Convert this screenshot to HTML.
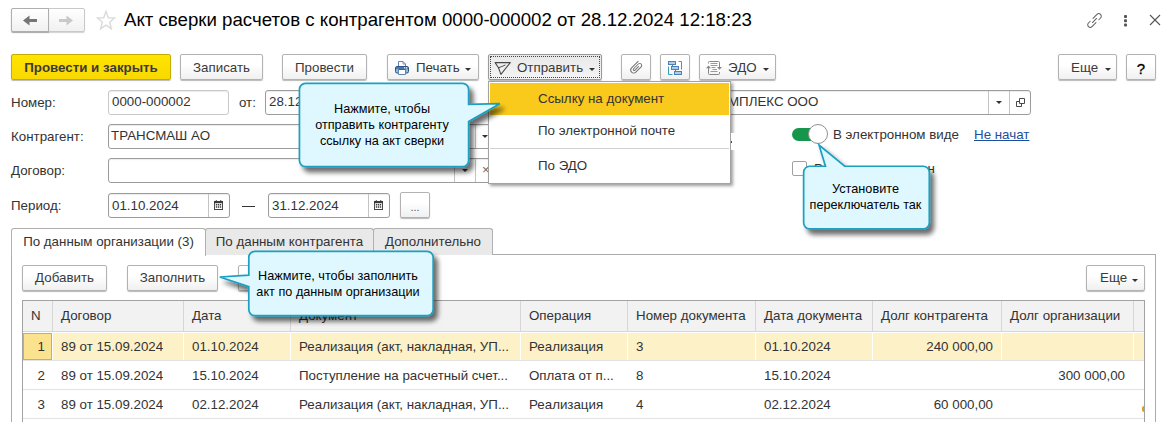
<!DOCTYPE html>
<html lang="ru">
<head>
<meta charset="utf-8">
<title>Акт сверки расчетов с контрагентом</title>
<style>
*{box-sizing:border-box;margin:0;padding:0}
html,body{width:1175px;height:422px;overflow:hidden;background:#fff}
body{position:relative;font-family:"Liberation Sans",sans-serif;font-size:13px;color:#333;line-height:1}
.abs{position:absolute}
.title{left:124px;top:9px;font-size:18.67px;line-height:22px;color:#000;white-space:nowrap}
.btn{position:absolute;top:54px;height:26px;border:1px solid #b2b2b2;border-radius:2px;background:linear-gradient(#ffffff 40%,#f0f0f0);box-shadow:0 1px 1px rgba(0,0,0,.28);font-size:13.33px;line-height:26px;color:#3a3a3a;text-align:center;white-space:nowrap}
.btn.yellow{background:linear-gradient(#ffe400,#f9d800);border-color:#c4ad00;font-weight:bold;color:#3a3a3a}
.btn.focus{background:linear-gradient(#e9e9e9,#f4f4f4);border-color:#9a9a9a}
.btn.focus:after{content:"";position:absolute;left:1px;top:1px;right:1px;bottom:1px;border:1px dotted #444}
.caret{display:inline-block;width:0;height:0;border-left:3px solid transparent;border-right:3px solid transparent;border-top:3px solid #333;vertical-align:middle;margin-left:4px;position:relative;top:1px}
.car{position:absolute;width:0;height:0;border-left:3px solid transparent;border-right:3px solid transparent;border-top:3px solid #333}
.lbl{position:absolute;left:11px;font-size:13.33px;line-height:16px;color:#333;white-space:nowrap}
.inp{position:absolute;height:25px;border:1px solid #9c9c9c;border-radius:3px;background:#fff;font-size:13.33px;line-height:22px;padding-left:3px;color:#333;white-space:nowrap;overflow:hidden;box-shadow:inset 0 1px 1px rgba(0,0,0,.08)}
.ibtn{position:absolute;height:24px;width:21px;border:1px solid #b8b8b8;background:#fff;border-radius:0 3px 3px 0}
.tab{position:absolute;top:228px;height:27px;border:1px solid #b0b0b0;border-bottom:none;background:#e9e9e9;font-size:13.33px;line-height:26px;color:#333;text-align:center;white-space:nowrap;border-radius:3px 3px 0 0}
.tab.active{background:#fff;height:28px;z-index:2}
.panel{position:absolute;left:11px;top:254px;width:1145px;height:200px;border:1px solid #ababab;background:#fff}
.sbtn{position:absolute;top:265px;height:26px;border:1px solid #b2b2b2;border-radius:2px;background:linear-gradient(#ffffff 40%,#f0f0f0);box-shadow:0 1px 1px rgba(0,0,0,.28);font-size:13.33px;line-height:24px;color:#3a3a3a;text-align:center;white-space:nowrap}
.grid{position:absolute;left:22px;top:300px;width:1123px;height:130px;border:1px solid #a2a2a2;background:#fff}
.hdr{position:absolute;left:0;top:0;width:1121px;height:31px;background:#f2f2f2;border-bottom:1px solid #d6d6d6}
.hc{position:absolute;top:0;height:30px;border-left:1px solid #d6d6d6;font-size:13.33px;line-height:30px;padding-left:8px;color:#333;white-space:nowrap;overflow:hidden}
.row{position:absolute;left:0;width:1121px;height:29px;border-bottom:1px solid #e3e3e3}
.row.sel{background:#fdf1c8;border-top:1px solid #fff}
.row.sel .c{top:-1px}
.row.sel .c{border-left-color:#fff}
.c{position:absolute;top:0;height:28px;font-size:13.33px;line-height:28px;padding-top:1px;padding-left:8px;border-left:1px solid transparent;color:#333;white-space:nowrap;overflow:hidden}
.c.r{text-align:right;padding-left:0;padding-right:8px}
.menu{position:absolute;left:488px;top:81px;width:243px;height:103px;background:#fff;border:1px solid #a3a3a3;box-shadow:2px 2px 3px rgba(0,0,0,.38);z-index:5}
.mi{position:absolute;left:1px;width:239px;height:32px;font-size:13.33px;line-height:31px;padding-left:48px;color:#333;white-space:nowrap}
.mi.hl{background:#f9c91c}
.callout{position:absolute;z-index:10}
.ctext{position:absolute;font-size:12.700px;line-height:16px;color:#000;text-align:center;white-space:nowrap;z-index:11}
</style>
</head>
<body>

<!-- nav -->
<div class="abs" style="left:11px;top:8px;width:74px;height:24px;border:1px solid #c9c9c9;border-radius:2px;background:linear-gradient(#fff,#f1f1f1);box-shadow:0 1px 1px rgba(0,0,0,.18)"></div>
<div class="abs" style="left:11px;top:8px;width:38px;height:24px;border:1px solid #aeaeae;border-radius:2px 0 0 2px;background:linear-gradient(#fff,#f1f1f1);box-shadow:0 1px 1px rgba(0,0,0,.2)"></div>
<svg class="abs" style="left:12px;top:9px" width="72" height="22" viewBox="0 0 72 22">
  <path d="M11 11.500 L17.500 6.500 V10 H25 V13 H17.500 V16.500 Z" fill="#757575"/>
  <path d="M61 11.500 L54.500 6.500 V10 H47 V13 H54.500 V16.500 Z" fill="#c9c9c9"/>
</svg>
<svg class="abs" style="left:95px;top:9px" width="22" height="22" viewBox="0 0 22 22"><path d="M11 2.500 L13.300 8.700 L19.400 9 L14.700 13.200 L16.300 19.700 L11 16.200 L5.700 19.700 L7.300 13.200 L2.600 9 L8.700 8.700 Z" fill="none" stroke="#dcdcdc" stroke-width="1.500" stroke-linejoin="miter"/></svg>
<div class="abs title">Акт сверки расчетов с контрагентом 0000-000002 от 28.12.2024 12:18:23</div>

<!-- top-right icons -->
<svg class="abs" style="left:1085px;top:11px" width="19" height="19" viewBox="0 0 19 19" fill="none" stroke="#5e5e5e" stroke-width="1.100" stroke-linecap="round">
  <g transform="translate(9.500 9.500) rotate(-45) scale(0.9)">
    <path d="M0.500 -2.800 H6.700 a2.800 2.800 0 0 1 0 5.600 H4"/>
    <path d="M-0.500 2.800 H-6.700 a2.800 2.800 0 0 1 0 -5.600 H-4"/>
    <path d="M-3.200 0 H3.200"/>
  </g>
</svg>
<div class="abs" style="left:1124px;top:15px;width:2.500px;height:2.500px;border-radius:1px;background:#555;box-shadow:0 4.200px 0 #555,0 8.400px 0 #555"></div>
<svg class="abs" style="left:1149px;top:14px" width="12" height="12" viewBox="0 0 12 12"><path d="M1 1 L11 11 M11 1 L1 11" stroke="#555" stroke-width="1.100"/></svg>

<!-- toolbar -->
<div class="btn yellow" style="left:11px;width:160px">Провести и закрыть</div>
<div class="btn" style="left:180px;width:83px">Записать</div>
<div class="btn" style="left:282px;width:85px">Провести</div>
<div class="btn" style="left:387px;width:92px">
  <svg class="abs" style="left:7px;top:6px" width="16" height="15" viewBox="0 0 16 15">
    <path d="M3.500 5.500 V0.500 H8 L10.500 3 V5.500" fill="#fff" stroke="#6484ad" stroke-width="1"/>
    <path d="M8 0.500 V3 H10.500" fill="none" stroke="#6484ad" stroke-width="0.800"/>
    <rect x="0.500" y="5.500" width="13" height="6.500" rx="1.500" fill="#86c3da" stroke="#2f5287" stroke-width="1"/>
    <rect x="1" y="6" width="12" height="2.200" fill="#4c7bb3"/>
    <rect x="9" y="6.300" width="1.200" height="1.200" fill="#fff"/><rect x="11" y="6.300" width="1.200" height="1.200" fill="#fff"/>
    <path d="M3.500 8.500 H10.500 V13.500 H3.500 Z" fill="#fff" stroke="#6484ad" stroke-width="1"/>
    <path d="M3.500 8.300 H10.500" stroke="#2f5287" stroke-width="0.800"/>
  </svg>
  <span class="abs" style="left:28px;top:0">Печать</span><span class="car" style="left:77px;top:13px"></span></div>
<div class="btn focus" style="left:488px;width:114px">
  <svg class="abs" style="left:5px;top:6px" width="18" height="15" viewBox="0 0 18 15" fill="none" stroke="#484848" stroke-width="1.050" stroke-linejoin="round" stroke-linecap="round">
    <path d="M1.100 1.600 H16.300 L6.900 13.400 L4.500 6.700 Z"/><path d="M4.500 6.700 Q7.500 5.800 11 4.100"/>
  </svg>
  <span class="abs" style="left:28px;top:0">Отправить</span><span class="car" style="left:100px;top:13px"></span></div>
<div class="btn" style="left:621px;width:30px">
  <svg class="abs" style="left:6px;top:4px" width="17" height="17" viewBox="0 0 17 17" fill="none" stroke="#6f6f6f" stroke-width="0.950" stroke-linecap="round">
    <g transform="translate(8.400 8.300) rotate(-45)"><path d="M5.400 -3 H-3.800 a3 3 0 0 0 0 6 H3.700 a2 2 0 0 0 0 -4 H-3 a1 1 0 0 0 0 2 H2"/></g>
  </svg></div>
<div class="btn" style="left:660px;width:30px">
  <svg class="abs" style="left:6px;top:6px" width="16" height="15" viewBox="0 0 16 15">
    <path d="M1.500 5.500 V13.500 H5.500" fill="none" stroke="#3f9ab5" stroke-width="1"/>
    <path d="M11.500 0.500 H14.500 V8.500" fill="none" stroke="#3f9ab5" stroke-width="1"/>
    <rect x="1.500" y="0.500" width="7" height="3" fill="#b3cbea" stroke="#4d7fb8"/>
    <rect x="4.500" y="5.500" width="7" height="3" fill="#b3cbea" stroke="#4d7fb8"/>
    <rect x="7.500" y="10.500" width="7" height="3" fill="#b3cbea" stroke="#4d7fb8"/>
    <path d="M5.500 3.500 V5.500 M8.500 8.500 V10.500" stroke="#4d7fb8"/>
  </svg></div>
<div class="btn" style="left:699px;width:77px">
  <svg class="abs" style="left:6px;top:6px" width="17" height="15" viewBox="0 0 17 15" fill="none" stroke="#858585" stroke-width="1">
    <path d="M2.500 2.500 V1.500 a1 1 0 0 1 1 -1 H12.500 a1 1 0 0 1 1 1 V6"/><path d="M2.500 7 V12.500 a1 1 0 0 0 1 1 H12.500 a1 1 0 0 0 1 -1 V11"/>
    <path d="M4.500 2.500 H11.500 M4.500 4.500 H11.500 M5.500 6.500 H9.500 M6.500 8.500 H11 M4.500 10.500 H11.500" stroke="#8f8f8f" stroke-width="0.900"/>
    <path d="M0 7.200 H5 L2.500 4.600 Z" fill="#858585" stroke="none"/><path d="M11 6.100 H16 L13.500 8.700 Z" fill="#858585" stroke="none"/>
  </svg>
  <span class="abs" style="left:28px;top:0">ЭДО</span><span class="car" style="left:63px;top:13px"></span></div>
<div class="btn" style="left:1058px;width:59px"><span class="abs" style="left:12px;top:0">Еще</span><span class="car" style="left:46px;top:13px"></span></div>
<div class="btn" style="left:1126px;width:30px;color:#000;font-size:15px;line-height:28px;-webkit-text-stroke:0.3px #000">?</div>

<!-- form -->
<div class="lbl" style="top:95px">Номер:</div>
<div class="inp" style="left:108px;top:90px;width:121px;border-color:#c9c9c9">0000-000002</div>
<div class="lbl" style="left:239px;top:95px">от:</div>
<div class="inp" style="left:265px;top:90px;width:140px">28.12.2024 12:18:23</div>
<div class="inp" style="left:620px;top:90px;width:411px;padding-left:89px">КОМПЛЕКС ООО</div>
<div class="abs" style="left:988px;top:91px;width:1px;height:23px;background:#c4c4c4"></div>
<div class="abs" style="left:1009px;top:91px;width:1px;height:23px;background:#c4c4c4"></div>
<span class="car" style="left:996px;top:101px"></span>
<svg class="abs" style="left:1016px;top:98px" width="10" height="10" viewBox="0 0 10 10" fill="none" stroke="#4a4a4a" stroke-width="1"><path d="M3.500 0.500 H8.500 V5.500 H3.500 Z"/><path d="M3.500 3.500 H0.500 V8.500 H5.500 V5.500"/></svg>

<div class="lbl" style="top:129px">Контрагент:</div>
<div class="inp" style="left:108px;top:124px;width:408px;padding-left:2px">ТРАНСМАШ АО</div>
<div class="abs" style="left:475px;top:125px;width:1px;height:23px;background:#c4c4c4"></div>
<span class="car" style="left:482px;top:135px"></span>
<div class="lbl" style="top:163px">Договор:</div>
<div class="inp" style="left:108px;top:158px;width:408px"></div>
<div class="abs" style="left:454px;top:159px;width:1px;height:23px;background:#c4c4c4"></div>
<div class="abs" style="left:475px;top:159px;width:1px;height:23px;background:#c4c4c4"></div>
<span class="car" style="left:462px;top:169px"></span>
<div class="abs" style="left:482px;top:163px;font-size:13px;line-height:14px;color:#666">×</div>
<div class="lbl" style="top:198px">Период:</div>
<div class="inp" style="left:108px;top:193px;width:122px;line-height:24px">01.10.2024</div>
<div class="abs" style="left:208px;top:194px;width:1px;height:23px;background:#c4c4c4"></div>
<svg class="abs cal" style="left:214px;top:200px" width="9" height="10" viewBox="0 0 10 11"><path d="M2 0 H3 V1 H7 V0 H8 V1 H10 V11 H0 V1 H2 Z" fill="#3a3a3a"/><rect x="1" y="3.500" width="8" height="6.500" fill="#fff"/><path d="M2 4.500 H3.500 V6 H2 Z M4.250 4.500 H5.750 V6 H4.250 Z M6.500 4.500 H8 V6 H6.500 Z M2 7 H3.500 V8.500 H2 Z M4.250 7 H5.750 V8.500 H4.250 Z M6.500 7 H8 V8.500 H6.500 Z" fill="#3a3a3a"/></svg>
<div class="abs" style="left:242px;top:206px;width:13px;height:1px;background:#333"></div>
<div class="inp" style="left:268px;top:193px;width:122px;line-height:24px">31.12.2024</div>
<div class="abs" style="left:368px;top:194px;width:1px;height:23px;background:#c4c4c4"></div>
<svg class="abs cal" style="left:374px;top:200px" width="9" height="10" viewBox="0 0 10 11"><path d="M2 0 H3 V1 H7 V0 H8 V1 H10 V11 H0 V1 H2 Z" fill="#3a3a3a"/><rect x="1" y="3.500" width="8" height="6.500" fill="#fff"/><path d="M2 4.500 H3.500 V6 H2 Z M4.250 4.500 H5.750 V6 H4.250 Z M6.500 4.500 H8 V6 H6.500 Z M2 7 H3.500 V8.500 H2 Z M4.250 7 H5.750 V8.500 H4.250 Z M6.500 7 H8 V8.500 H6.500 Z" fill="#3a3a3a"/></svg>
<div class="btn" style="left:400px;top:192px;width:30px;height:26px;font-size:11px;line-height:29px;color:#555">...</div>

<!-- toggle -->
<div class="abs" style="left:792px;top:128px;width:32px;height:13px;border-radius:7px;background:#16964a"></div>
<div class="abs" style="left:808px;top:124px;width:20px;height:20px;border-radius:10px;background:#fff;border:1px solid #8f8f8f"></div>
<div class="lbl" style="left:833px;top:127px;font-size:13.33px">В электронном виде</div>
<div class="lbl" style="left:974px;top:127px;font-size:13.33px;color:#1b4f9e;text-decoration:underline">Не начат</div>
<div class="abs" style="left:792px;top:161px;width:15px;height:15px;border:1px solid #a0a0a0;border-radius:2px;background:#fff"></div>
<div class="lbl" style="left:814px;top:161px;font-size:13.33px;letter-spacing:0.300px">Расчет согласован</div>

<!-- tabs -->
<div class="panel"></div>
<div class="tab active" style="left:11px;width:195px">По данным организации (3)</div>
<div class="tab" style="left:205px;width:169px">По данным контрагента</div>
<div class="tab" style="left:373px;width:120px">Дополнительно</div>

<div class="sbtn" style="left:22px;width:85px">Добавить</div>
<div class="sbtn" style="left:127px;width:91px">Заполнить</div>
<div class="sbtn" style="left:238px;width:30px"></div>
<div class="sbtn" style="left:1086px;width:59px"><span class="abs" style="left:13px;top:0">Еще</span><span class="car" style="left:45px;top:13px"></span></div>

<!-- grid -->
<div class="grid">
  <div class="hdr">
    <div class="hc" style="left:0px;width:29px;border-left:none;padding-left:8px">N</div>
    <div class="hc" style="left:29px;width:131px">Договор</div>
    <div class="hc" style="left:160px;width:107px">Дата</div>
    <div class="hc" style="left:267px;width:230px">Документ</div>
    <div class="hc" style="left:497px;width:107px">Операция</div>
    <div class="hc" style="left:604px;width:128px">Номер документа</div>
    <div class="hc" style="left:732px;width:117px">Дата документа</div>
    <div class="hc" style="left:849px;width:129px">Долг контрагента</div>
    <div class="hc" style="left:978px;width:132px">Долг организации</div>
    <div class="hc" style="left:1110px;width:11px"></div>
  </div>
  <div class="row sel" style="top:31px">
    <div class="c r" style="left:0px;width:29px;top:0;height:27px;border:1px solid #e9b100;background:#fbe28f;line-height:26px;padding-top:0;padding-right:6px">1</div>
    <div class="c" style="left:29px;width:131px">89 от 15.09.2024</div>
    <div class="c" style="left:160px;width:107px">01.10.2024</div>
    <div class="c" style="left:267px;width:230px">Реализация (акт, накладная, УП...</div>
    <div class="c" style="left:497px;width:107px">Реализация</div>
    <div class="c" style="left:604px;width:128px">3</div>
    <div class="c" style="left:732px;width:117px">01.10.2024</div>
    <div class="c r" style="left:849px;width:129px">240 000,00</div>
    <div class="c r" style="left:978px;width:132px"></div>
    <div class="c" style="left:1110px;width:11px"></div>
  </div>
  <div class="row" style="top:60px">
    <div class="c r" style="left:0px;width:29px;padding-right:7px">2</div>
    <div class="c" style="left:29px;width:131px">89 от 15.09.2024</div>
    <div class="c" style="left:160px;width:107px">15.10.2024</div>
    <div class="c" style="left:267px;width:230px">Поступление на расчетный счет...</div>
    <div class="c" style="left:497px;width:107px">Оплата от п...</div>
    <div class="c" style="left:604px;width:128px">8</div>
    <div class="c" style="left:732px;width:117px">15.10.2024</div>
    <div class="c r" style="left:978px;width:132px">300 000,00</div>
  </div>
  <div class="row" style="top:89px">
    <div class="c r" style="left:0px;width:29px;padding-right:7px">3</div>
    <div class="c" style="left:29px;width:131px">89 от 15.09.2024</div>
    <div class="c" style="left:160px;width:107px">02.12.2024</div>
    <div class="c" style="left:267px;width:230px">Реализация (акт, накладная, УП...</div>
    <div class="c" style="left:497px;width:107px">Реализация</div>
    <div class="c" style="left:604px;width:128px">4</div>
    <div class="c" style="left:732px;width:117px">02.12.2024</div>
    <div class="c r" style="left:849px;width:129px">60 000,00</div>
  </div>
</div>

<div class="abs" style="left:1142px;top:406px;width:2px;height:6px;background:#e59a1f;border-radius:2px 0 0 2px"></div>

<!-- dropdown menu -->
<div class="menu">
  <div class="mi hl" style="top:1px">Ссылку на документ</div>
  <div class="mi" style="top:33px">По электронной почте</div>
  <div class="abs" style="left:1px;top:66px;width:239px;height:1px;background:#d0d0d0"></div>
  <div class="mi" style="top:68px">По ЭДО</div>
</div>

<div class="abs" style="left:731px;top:133px;width:6px;height:17px;background:#fff;z-index:6"></div>
<div class="abs" style="left:731px;top:141px;width:1px;height:2px;background:#2a4f9a;z-index:7"></div>

<!-- callouts -->
<svg class="callout" style="left:280px;top:70px" width="240" height="120" viewBox="0 0 240 120">
  <defs><filter id="sh" x="-20%" y="-20%" width="150%" height="150%"><feGaussianBlur in="SourceAlpha" stdDeviation="2.400"/><feOffset dx="4" dy="4.500"/><feComponentTransfer><feFuncA type="linear" slope="0.580"/></feComponentTransfer><feMerge><feMergeNode/><feMergeNode in="SourceGraphic"/></feMerge></filter></defs>
  <path filter="url(#sh)" d="M25.45 13.45 H182.6 a6 6 0 0 1 6 6 V34.3 L219.8 33.7 L188.6 51.5 V90.55 a6 6 0 0 1 -6 6 H25.45 a6 6 0 0 1 -6 -6 V19.45 a6 6 0 0 1 6 -6 Z" fill="#dff8ff" stroke="#1a9fc1" stroke-width="1.700" stroke-linejoin="miter"/>
</svg>
<div class="ctext" style="left:297px;top:101px;width:170px">Нажмите, чтобы<br>отправить контрагенту<br>ссылку на акт сверки</div>

<svg class="callout" style="left:790px;top:130px" width="160" height="120" viewBox="0 0 160 120">
  <path filter="url(#sh)" d="M19.65 36.25 H35.5 L29 15 L54.7 36.25 H133.3 a6 6 0 0 1 6 6 V92.85 a6 6 0 0 1 -6 6 H19.65 a6 6 0 0 1 -6 -6 V42.25 a6 6 0 0 1 6 -6 Z" fill="#dff8ff" stroke="#1a9fc1" stroke-width="1.700" stroke-linejoin="miter"/>
</svg>
<div class="ctext" style="left:803px;top:181px;width:125px">Установите<br>переключатель так</div>

<svg class="callout" style="left:210px;top:240px" width="250" height="100" viewBox="0 0 250 100">
  <path filter="url(#sh)" d="M44.8 11.3 H217.15 a6 6 0 0 1 6 6 V69.55 a6 6 0 0 1 -6 6 H44.8 a6 6 0 0 1 -6 -6 V46.7 L9.8 37 L38.8 35.2 V17.3 a6 6 0 0 1 6 -6 Z" fill="#dff8ff" stroke="#1a9fc1" stroke-width="1.700" stroke-linejoin="miter"/>
</svg>
<div class="ctext" style="left:245px;top:268px;width:186px">Нажмите, чтобы заполнить<br>акт по данным организации</div>

</body>
</html>
